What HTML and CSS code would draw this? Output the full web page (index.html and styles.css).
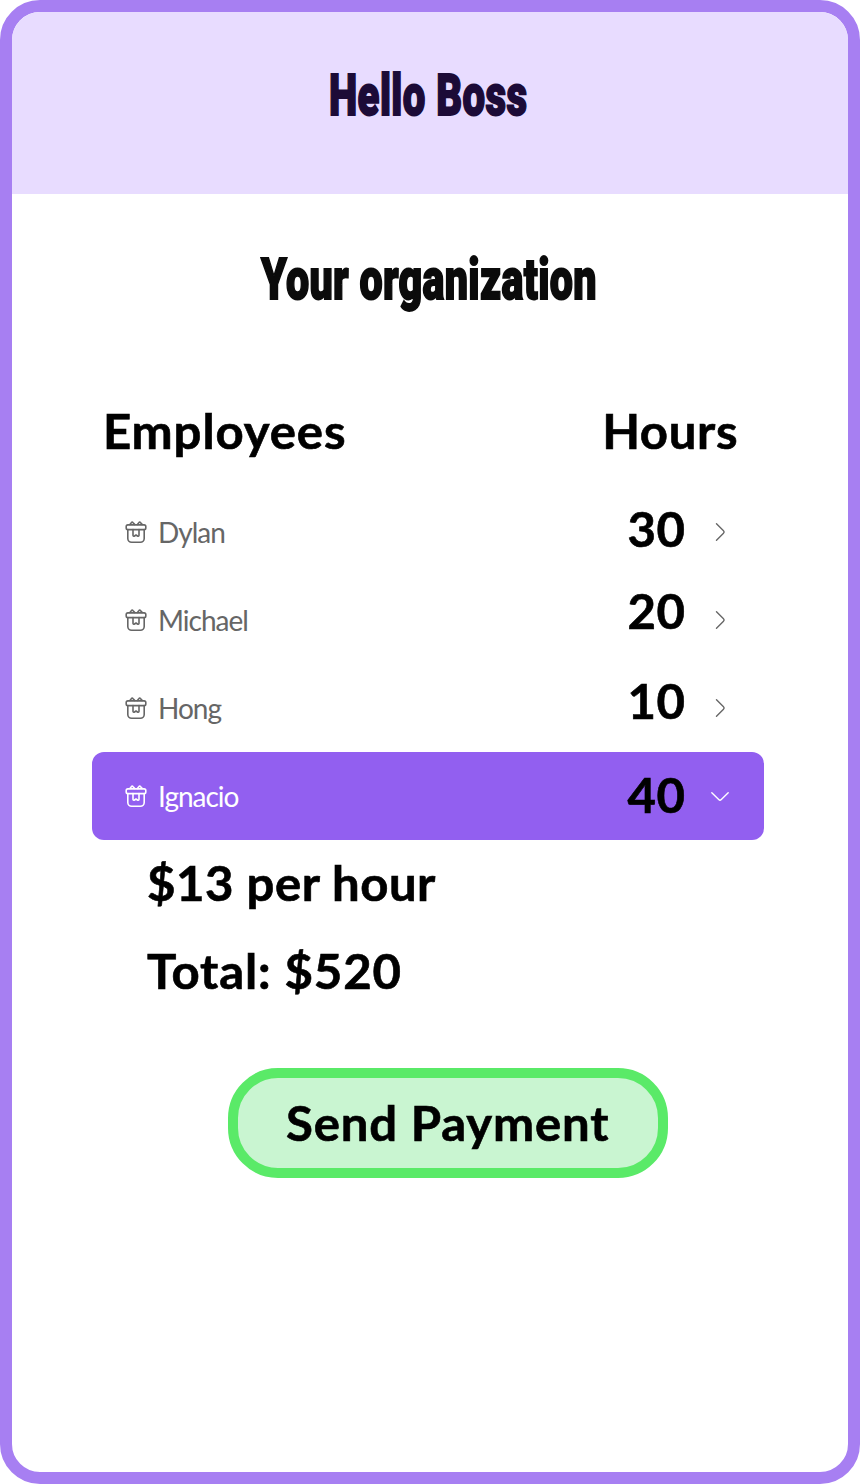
FILE: index.html
```html
<!DOCTYPE html>
<html lang="en">
<head>
<meta charset="utf-8">
<title>Hello Boss</title>
<link rel="stylesheet" href="styles.css">
</head>
<body>
<svg width="0" height="0" class="defs">
  <symbol id="gift" viewBox="0 0 24 24">
    <rect x="2.2" y="4.9" width="19.6" height="4.7" rx="1.7"/>
    <path d="M3.8 9.6V18.5a3.8 3.8 0 0 0 3.8 3.8h8.8a3.8 3.8 0 0 0 3.8-3.8V9.6M9 9.6v5.6c0 .9.8 1.3 1.5.8l1.5-1 1.5 1c.7.5 1.5.1 1.5-.8V9.6M5.9 4.4l1.6-1.9c.4-.5 1-.5 1.4 0l1.7 1.9M13.4 4.4l1.6-1.9c.4-.5 1-.5 1.4 0l1.7 1.9"/>
  </symbol>
  <symbol id="right" viewBox="0 0 24 24"><path d="M8.5 3.8l7 6.9c.8.8.8 1.8 0 2.6l-7 6.9"/></symbol>
  <symbol id="down" viewBox="0 0 24 24"><path d="M3.8 8.7l6.9 6.8c.8.8 1.8.8 2.6 0l6.9-6.8"/></symbol>
</svg>
<div class="screen">
  <header class="top"><h1 class="display hello">Hello Boss</h1></header>
  <main class="content">
    <h2 class="display org">Your organization</h2>
    <div class="heads"><span class="big employees">Employees</span><span class="big hours">Hours</span></div>
    <ul class="list">
      <li class="row"><svg class="icon"><use href="#gift"/></svg><span class="name dylan">Dylan</span><span class="big num n30">30</span><svg class="icon chevron"><use href="#right"/></svg></li>
      <li class="row"><svg class="icon"><use href="#gift"/></svg><span class="name michael">Michael</span><span class="big num n20">20</span><svg class="icon chevron"><use href="#right"/></svg></li>
      <li class="row"><svg class="icon"><use href="#gift"/></svg><span class="name hong">Hong</span><span class="big num n10">10</span><svg class="icon chevron"><use href="#right"/></svg></li>
      <li class="row active"><svg class="icon"><use href="#gift"/></svg><span class="name ignacio">Ignacio</span><span class="big num n40">40</span><svg class="icon chevron"><use href="#down"/></svg></li>
    </ul>
    <div class="details">
      <p class="big rate">$13 per hour</p>
      <p class="big total">Total: $520</p>
    </div>
    <button class="pay"><span class="big send">Send Payment</span></button>
  </main>
</div>
</body>
</html>
```
FILE: styles.css
```css
* { box-sizing: border-box; }
body { margin: 0; background: #fff; font-family: Lato, "Open Sans", sans-serif; }
h1, h2, p, ul { margin: 0; padding: 0; }
.defs { display: block; }
.screen {
  width: 860px;
  height: 1484px;
  border: 12px solid #a77ff2;
  border-radius: 40px;
  overflow: hidden;
  background: #fff;
}
.top {
  height: 182px;
  padding: 49px 0 0 317px;
  background: #e8dcff;
}
.display {
  width: max-content;
  font: 900 57px/70px Roboto, sans-serif;
  -webkit-text-stroke: 1.8px currentColor;
  transform-origin: 0 50%;
  white-space: nowrap;
}
.hello { color: #1c0b37; letter-spacing: .6px; transform: scaleX(.704); }
.content { display: flex; flex-direction: column; padding: 51px 84px 0 80px; }
.org { margin-left: 169px; color: #0b0b0b; letter-spacing: .4px; transform: scaleX(.724); }
.big {
  display: inline-block;
  font-size: 47px;
  line-height: 60px;
  font-weight: 700;
  color: #000;
  letter-spacing: .6px;
  white-space: nowrap;
  -webkit-text-stroke: .6px #000;
  transform: scaleX(1.045);
  transform-origin: 0 50%;
}
.heads { display: flex; justify-content: space-between; margin-top: 86px; padding: 0 26px 0 11px; }
.employees { letter-spacing: .85px; }
.hours { transform-origin: 100% 50%; }
.list { list-style: none; margin-top: 27px; }
.row { display: flex; align-items: center; height: 88px; padding: 0 32px; border-radius: 12px; color: #666; }
.active { background: #925ff0; color: #fff; }
.icon { width: 24px; height: 24px; flex: none; fill: none; stroke: currentColor; stroke-width: 1.6; stroke-linecap: round; stroke-linejoin: round; }
.chevron { stroke-width: 1.4; }
.name { font-size: 28px; line-height: 40px; margin-left: 10px; letter-spacing: -1px; }
.num { margin-left: auto; margin-right: 22px; transform-origin: 100% 50%; }
.n20 { margin-bottom: 18px; }
.n10 { margin-bottom: 14px; }
.n30 { margin-bottom: 6px; }
.n40 { margin-bottom: 2px; }
.details { display: flex; flex-direction: column; align-items: flex-start; margin-top: -1px; padding-left: 55px; }
.details p { line-height: 88px; }
.rate { letter-spacing: .5px; }
.total { letter-spacing: .85px; }
.send { letter-spacing: .8px; transform-origin: 50% 50%; }
.pay {
  width: 440px;
  height: 110px;
  margin: 53px 0 0 136px;
  padding: 0;
  border: 10px solid #5aea68;
  border-radius: 50px;
  background: #c9f5d1;
  font-family: inherit;
}
```
